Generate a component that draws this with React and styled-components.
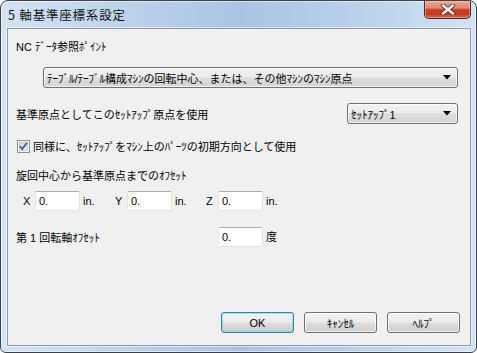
import React from 'react'
import styled, { createGlobalStyle } from 'styled-components'

const Global = createGlobalStyle`
  html, body { margin: 0; padding: 0; background: #ffffff; }
  body { font-family: "Liberation Sans", "Noto Sans CJK JP", sans-serif; }
`

const Window = styled.div`
  box-sizing: border-box;
  width: 477px;
  height: 353px;
  display: flex;
  flex-direction: column;
  border: 1px solid #3c4148;
  border-radius: 8px 8px 6px 6px;
  overflow: hidden;
  background:
    linear-gradient(to right, #d3e3f4 0%, #bdd3eb 25%, #a9c4e2 50%, #b7cfe9 72%, #d2e2f3 100%);
  box-shadow: inset 0 0 0 1px rgba(255, 255, 255, 0.55);
`

const TitleBar = styled.div`
  height: 27px;
  flex: none;
  display: flex;
  align-items: flex-start;
  padding: 0 5px 0 7px;
`

const Title = styled.div`
  margin-top: 6px;
  font-family: "Noto Sans CJK JP", sans-serif;
  font-size: 12.5px;
  letter-spacing: 0.8px;
  line-height: 16px;
  color: #111;
`

const CloseButton = styled.div`
  margin-left: auto;
  width: 47px;
  height: 18px;
  box-sizing: border-box;
  display: flex;
  align-items: center;
  justify-content: center;
  border: 1px solid #5b2218;
  border-top: none;
  border-radius: 0 0 5px 5px;
  background: linear-gradient(to bottom, #e9a897 0%, #dc8a74 40%, #c4432b 52%, #c33a21 75%, #d8644a 100%);
  box-shadow: inset 0 0 0 1px rgba(255, 210, 200, 0.45);
`

const Client = styled.div`
  flex: 1;
  margin: 0 5px 6px 6px;
  box-sizing: border-box;
  border: 1px solid #8a99ab;
  background: #f0f0f0;
  display: flex;
  flex-direction: column;
  padding: 11px 10px 12px 8px;
  font-family: "Liberation Sans", "Noto Sans CJK JP", sans-serif;
  font-size: 11px;
  color: #000;
  box-shadow: 0 0 0 1px rgba(255, 255, 255, 0.5);
`

const Label = styled.div`
  height: 14px;
  line-height: 14px;
  margin-top: ${p => p.$top || 0}px;
  white-space: nowrap;
`

const SelectBox = styled.div`
  box-sizing: border-box;
  height: 21px;
  width: ${p => p.$width ? `${p.$width}px` : 'auto'};
  margin: ${p => p.$margin || '0'};
  border: 1px solid #707070;
  border-radius: 3px;
  background: linear-gradient(to bottom, #f2f2f2 0%, #ebebeb 48%, #dddddd 52%, #d4d4d4 100%);
  display: flex;
  align-items: center;
  padding: 0 6px 0 3px;
  white-space: nowrap;
  box-shadow: inset 0 0 0 1px rgba(255, 255, 255, 0.7);
`

const SelectText = styled.span`
  flex: 1;
  overflow: hidden;
`

const Row = styled.div`
  display: flex;
  align-items: center;
  height: ${p => p.$height || 21}px;
  margin-top: ${p => p.$top || 0}px;
`

const CheckLabel = styled.span`
  margin-left: 3px;
  line-height: 14px;
`

const AxisGrid = styled.div`
  display: grid;
  grid-template-columns: 12px 45px 35px 12px 45px 34px 12px 45px auto;
  align-items: center;
  height: 20px;
  margin-top: 8px;
  padding-left: 7px;
`

const RotGrid = styled.div`
  display: grid;
  grid-template-columns: 202px 45px auto;
  align-items: center;
  height: 20px;
  margin-top: 16px;
`

const AxisLabel = styled.span`
  line-height: 14px;
`

const Unit = styled.span`
  padding-left: 3px;
  line-height: 14px;
`

const TextInput = styled.div`
  box-sizing: border-box;
  height: 20px;
  background: #fff;
  border: 1px solid #e2e3ea;
  border-top-color: #abadb3;
  border-radius: 2px;
  padding: 2px 3px 0;
  line-height: 14px;
`

const ButtonRow = styled.div`
  margin-top: auto;
  display: flex;
  justify-content: flex-end;
  gap: 10px;
`

const Button = styled.div`
  box-sizing: border-box;
  width: 73px;
  height: 21px;
  display: flex;
  align-items: center;
  justify-content: center;
  border: 1px solid ${p => p.$default ? '#3c7fb1' : '#707070'};
  border-radius: 3px;
  background: ${p => p.$default
    ? 'linear-gradient(to bottom, #eaf6fd 0%, #d9f0fc 48%, #bee6fd 52%, #a7d9f5 100%)'
    : 'linear-gradient(to bottom, #f2f2f2 0%, #ebebeb 48%, #dddddd 52%, #cfcfcf 100%)'};
  box-shadow: inset 0 0 0 1px ${p => p.$default ? 'rgba(72, 200, 255, 0.45)' : 'rgba(255, 255, 255, 0.75)'};
  ${p => p.$default && 'background: linear-gradient(to bottom, #f2f2f2 0%, #ebebeb 48%, #dddddd 52%, #cfcfcf 100%);'}
`

function Arrow() {
  return (
    <svg width="8" height="5" viewBox="0 0 8 5">
      <path d="M0 0 H8 L4 4.5 Z" fill="#000" />
    </svg>
  )
}

function CloseGlyph() {
  return (
    <svg width="16" height="11" viewBox="0 0 16 11">
      <path d="M3 1.5 L13 9.5 M13 1.5 L3 9.5" stroke="#6b2a20" strokeWidth="4.2" strokeLinecap="round" />
      <path d="M3 1.5 L13 9.5 M13 1.5 L3 9.5" stroke="#ffffff" strokeWidth="2.4" strokeLinecap="round" />
    </svg>
  )
}

function CheckBox() {
  return (
    <svg width="13" height="13" viewBox="0 0 13 13">
      <defs>
        <linearGradient id="cb" x1="0" y1="0" x2="1" y2="1">
          <stop offset="0" stopColor="#cfd1d3" />
          <stop offset="1" stopColor="#f6f6f6" />
        </linearGradient>
      </defs>
      <rect x="0.5" y="0.5" width="12" height="12" fill="#f4f4f4" stroke="#8f8f8f" />
      <rect x="2.5" y="2.5" width="8" height="8" fill="url(#cb)" stroke="#b4b6b8" strokeWidth="0.6" />
      <path d="M3 6.2 L5.3 9 L10 2.8" fill="none" stroke="#4a5f92" strokeWidth="1.8" />
    </svg>
  )
}

export default function App() {
  return (
    <>
      <Global />
      <Window>
        <TitleBar>
          <Title>5 軸基準座標系設定</Title>
          <CloseButton><CloseGlyph /></CloseButton>
        </TitleBar>
        <Client>
          <Label>NC ﾃﾞｰﾀ参照ﾎﾟｲﾝﾄ</Label>
          <SelectBox $margin="13px 2px 0 27px">
            <SelectText>ﾃｰﾌﾞﾙ/ﾃｰﾌﾞﾙ構成ﾏｼﾝの回転中心、または、その他ﾏｼﾝのﾏｼﾝ原点</SelectText>
            <Arrow />
          </SelectBox>
          <Row $top={15}>
            <span>基準原点としてこのｾｯﾄｱｯﾌﾟ原点を使用</span>
            <SelectBox $width={111} $margin="0 2px 0 auto">
              <SelectText>ｾｯﾄｱｯﾌﾟ1</SelectText>
              <Arrow />
            </SelectBox>
          </Row>
          <Row $top={15} $height={15} style={{ paddingLeft: 1 }}>
            <CheckBox />
            <CheckLabel>同様に、ｾｯﾄｱｯﾌﾟをﾏｼﾝ上のﾊﾟｰﾂの初期方向として使用</CheckLabel>
          </Row>
          <Label $top={15}>旋回中心から基準原点までのｵﾌｾｯﾄ</Label>
          <AxisGrid>
            <AxisLabel>X</AxisLabel>
            <TextInput>0.</TextInput>
            <Unit>in.</Unit>
            <AxisLabel>Y</AxisLabel>
            <TextInput>0.</TextInput>
            <Unit>in.</Unit>
            <AxisLabel>Z</AxisLabel>
            <TextInput>0.</TextInput>
            <Unit>in.</Unit>
          </AxisGrid>
          <RotGrid>
            <span>第 1 回転軸ｵﾌｾｯﾄ</span>
            <TextInput>0.</TextInput>
            <Unit>度</Unit>
          </RotGrid>
          <ButtonRow>
            <Button $default>OK</Button>
            <Button>ｷｬﾝｾﾙ</Button>
            <Button>ﾍﾙﾌﾟ</Button>
          </ButtonRow>
        </Client>
      </Window>
    </>
  )
}
